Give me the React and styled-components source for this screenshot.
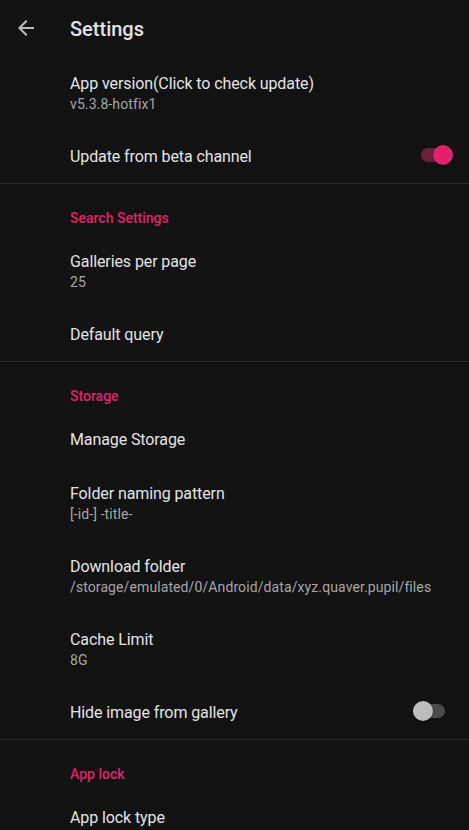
import React from "react";
import styled, { createGlobalStyle } from "styled-components";

const Global = createGlobalStyle`
  html, body { margin: 0; padding: 0; background: #121212; }
  body { font-family: Roboto, "Noto Sans", sans-serif; -webkit-font-smoothing: antialiased; }
  * { box-sizing: border-box; }
`;

const Page = styled.div`
  width: 469px;
  height: 830px;
  overflow: hidden;
  background: #121212;
  display: flex;
  flex-direction: column;
  & > * { flex-shrink: 0; }
`;

const Toolbar = styled.div`
  height: 56px;
  display: flex;
  align-items: center;
`;

const BackButton = styled.div`
  width: 70px;
  height: 56px;
  display: flex;
  align-items: center;
  padding-left: 14px;
`;

const Title = styled.div`
  font-size: 20px;
  font-weight: 500;
  color: #e2e2e2;
  line-height: 24px;
  margin-top: 2px;
`;

const Row = styled.div`
  display: flex;
  align-items: center;
  padding: 17px 16px 15px 70px;
  min-height: 54px;
`;

const RowText = styled.div`
  flex: 1;
  display: flex;
  flex-direction: column;
  min-width: 0;
`;

const RowTitle = styled.div`
  font-size: 16px;
  line-height: 22px;
  color: #e3e3e3;
  white-space: nowrap;
  letter-spacing: -0.1px;
`;

const RowSummary = styled.div`
  font-size: 14px;
  line-height: 19px;
  color: #a6a6a6;
  white-space: nowrap;
  letter-spacing: 0.1px;
`;

const Category = styled.div`
  border-top: 1px solid #2c2c2c;
  padding: 24px 16px 6px 70px;
  font-size: 14px;
  line-height: 20px;
  font-weight: 500;
  color: #e0226a;
`;

const SwitchTrack = styled.div`
  position: relative;
  width: 32px;
  height: 14px;
  border-radius: 7px;
  margin-right: ${(p) => p.$mr}px;
  margin-top: -4px;
  background: ${(p) => (p.$on ? "#6b1f3f" : "#4b4b4b")};
  flex-shrink: 0;
`;

const SwitchThumb = styled.div`
  position: absolute;
  top: -3px;
  ${(p) => (p.$on ? "right: 0;" : "left: 0;")}
  width: 20px;
  height: 20px;
  border-radius: 50%;
  background: ${(p) => (p.$on ? "#e0226a" : "#bdbdbd")};
  box-shadow: 0 1px 2px rgba(0,0,0,0.4);
`;

const Switch = ({ on, mr }) => (
  <SwitchTrack $on={on} $mr={mr}>
    <SwitchThumb $on={on} />
  </SwitchTrack>
);

const Pref = ({ title, summary, children }) => (
  <Row>
    <RowText>
      <RowTitle>{title}</RowTitle>
      {summary && <RowSummary>{summary}</RowSummary>}
    </RowText>
    {children}
  </Row>
);

export default function App() {
  return (
    <Page>
      <Global />
      <Toolbar>
        <BackButton>
          <svg width="24" height="24" viewBox="0 0 24 24">
            <path d="M20 11H7.83l5.59-5.59L12 4l-8 8 8 8 1.41-1.41L7.83 13H20v-2z" fill="#bdbdbd" />
          </svg>
        </BackButton>
        <Title>Settings</Title>
      </Toolbar>
      <Pref title="App version(Click to check update)" summary="v5.3.8-hotfix1" />
      <Pref title="Update from beta channel">
        <Switch on mr={0} />
      </Pref>
      <Category>Search Settings</Category>
      <Pref title="Galleries per page" summary="25" />
      <Pref title="Default query" />
      <Category>Storage</Category>
      <Pref title="Manage Storage" />
      <Pref title="Folder naming pattern" summary="[-id-] -title-" />
      <Pref title="Download folder" summary="/storage/emulated/0/Android/data/xyz.quaver.pupil/files" />
      <Pref title="Cache Limit" summary="8G" />
      <Pref title="Hide image from gallery">
        <Switch mr={8} />
      </Pref>
      <Category>App lock</Category>
      <Pref title="App lock type" />
    </Page>
  );
}
